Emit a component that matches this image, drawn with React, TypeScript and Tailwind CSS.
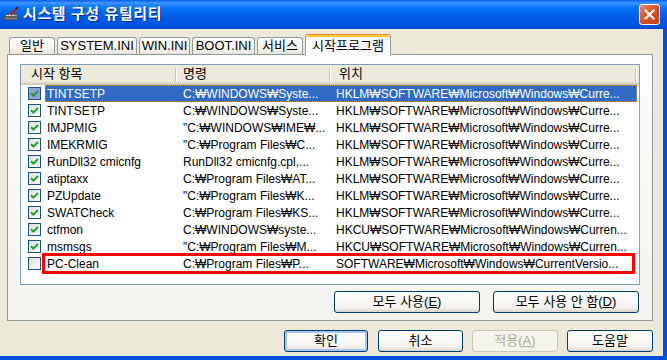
import React from "react";

type Row = { name: string; cmd: string; loc: string; checked: boolean };

const rows: Row[] = [
	{ name: "TINTSETP", cmd: "C:₩WINDOWS₩Syste...", loc: "HKLM₩SOFTWARE₩Microsoft₩Windows₩Curre...", checked: true },
	{ name: "TINTSETP", cmd: "C:₩WINDOWS₩Syste...", loc: "HKLM₩SOFTWARE₩Microsoft₩Windows₩Curre...", checked: true },
	{ name: "IMJPMIG", cmd: "\"C:₩WINDOWS₩IME₩...", loc: "HKLM₩SOFTWARE₩Microsoft₩Windows₩Curre...", checked: true },
	{ name: "IMEKRMIG", cmd: "\"C:₩Program Files₩C...", loc: "HKLM₩SOFTWARE₩Microsoft₩Windows₩Curre...", checked: true },
	{ name: "RunDll32 cmicnfg", cmd: "RunDll32 cmicnfg.cpl,...", loc: "HKLM₩SOFTWARE₩Microsoft₩Windows₩Curre...", checked: true },
	{ name: "atiptaxx", cmd: "C:₩Program Files₩AT...", loc: "HKLM₩SOFTWARE₩Microsoft₩Windows₩Curre...", checked: true },
	{ name: "PZUpdate", cmd: "\"C:₩Program Files₩K...", loc: "HKLM₩SOFTWARE₩Microsoft₩Windows₩Curre...", checked: true },
	{ name: "SWATCheck", cmd: "C:₩Program Files₩KS...", loc: "HKLM₩SOFTWARE₩Microsoft₩Windows₩Curre...", checked: true },
	{ name: "ctfmon", cmd: "C:₩WINDOWS₩syste...", loc: "HKCU₩SOFTWARE₩Microsoft₩Windows₩Curren...", checked: true },
	{ name: "msmsgs", cmd: "\"C:₩Program Files₩M...", loc: "HKCU₩SOFTWARE₩Microsoft₩Windows₩Curren...", checked: true },
	{ name: "PC-Clean", cmd: "C:₩Program Files₩P...", loc: "SOFTWARE₩Microsoft₩Windows₩CurrentVersio...", checked: false },
];

const tabs = [
	{ label: "일반", w: "w-[46px]" },
	{ label: "SYSTEM.INI", w: "w-[80px]" },
	{ label: "WIN.INI", w: "w-[51px]" },
	{ label: "BOOT.INI", w: "w-[63px]" },
	{ label: "서비스", w: "w-[46px]" },
];

function CheckBox({ checked, selected }: { checked: boolean; selected?: boolean }) {
	return (
		<span
			className={`flex h-[13px] w-[13px] items-center justify-center border border-[#1C5180] ${
				selected ? "bg-[#8FA6CC]" : "bg-[linear-gradient(135deg,#DCDCD7,#FFFFFF)]"
			}`}
		>
			{checked && (
				<svg width="9" height="9" viewBox="0 0 9 9">
					<path d="M1 4.2 L3.4 6.6 L8 2" stroke={selected ? "#2E8A3E" : "#21A121"} strokeWidth="2" fill="none" />
				</svg>
			)}
		</span>
	);
}

function XpButton({ children, w, isDefault, disabled }: { children: React.ReactNode; w: string; isDefault?: boolean; disabled?: boolean }) {
	return (
		<button
			className={`flex h-[22px] ${w} items-center justify-center rounded-[3px] border text-[13px] ${
				disabled
					? "border-[#C9C7BA] bg-[#F5F4EA] text-[#ACA899]"
					: "border-[#003C74] bg-[linear-gradient(to_bottom,#FFFFFF,#F3F2EC_80%,#D8D3C8)] text-black"
			} ${isDefault ? "shadow-[inset_0_0_0_2px_#A9C5F4]" : ""}`}
		>
			{children}
		</button>
	);
}

function TitleIcon() {
	return (
		<svg width="17" height="17" viewBox="0 0 17 17">
			<path d="M1 11 L4 8 L14 8 L15 11 Z" fill="#9C9C9C" stroke="#3C3C3C" strokeWidth="0.8" />
			<rect x="1" y="11" width="14" height="3" fill="#7A7A7A" stroke="#3C3C3C" strokeWidth="0.8" />
			<rect x="3" y="9" width="2" height="1" fill="#E8E8E8" />
			<rect x="6" y="9" width="2" height="1" fill="#E8E8E8" />
			<rect x="9" y="9" width="2" height="1" fill="#E8E8E8" />
			<path d="M8 9 L14 2" stroke="#C8201A" strokeWidth="2" />
			<path d="M13 3 L15 1" stroke="#2B2B2B" strokeWidth="2" />
		</svg>
	);
}

export default function App() {
	return (
		<div
			className="flex h-[360px] w-[667px] flex-col overflow-hidden bg-[#0050DE] text-[12px] text-black"
			style={{ fontFamily: '"Liberation Sans", "Noto Sans CJK KR", sans-serif' }}
		>
			{/* title bar */}
			<div className="flex h-[29px] shrink-0 items-center bg-[linear-gradient(to_bottom,#0A5DEA_0%,#3D95FF_10%,#1B80FF_20%,#0570F8_32%,#0262EE_48%,#0058E6_68%,#0055E3_88%,#0048CC_100%)] pl-[3px] pr-[7px]">
				<TitleIcon />
				<span className="ml-[3px] text-[15px] font-bold tracking-[0.6px] text-white [text-shadow:1px_1px_0_#0A2A8C]">시스템 구성 유틸리티</span>
				<div className="ml-auto flex h-[21px] w-[21px] items-center justify-center rounded-[3px] border border-white bg-[linear-gradient(135deg,#EB8B6E,#D8532E_45%,#C03A16)]">
					<svg width="11" height="11" viewBox="0 0 11 11">
						<path d="M1.5 1.5 L9.5 9.5 M9.5 1.5 L1.5 9.5" stroke="white" strokeWidth="2.2" strokeLinecap="square" />
					</svg>
				</div>
			</div>

			{/* body */}
			<div className="mb-[4px] mr-[4px] flex flex-1 flex-col bg-[#ECE9D8] pl-[7px] pr-[10px]">
				{/* tabs */}
				<div className="mt-[5px] flex h-[20px] items-end pl-[2px]">
					{tabs.map((t) => (
						<div
							key={t.label}
							className={`mr-[2px] flex h-[17px] ${t.w} items-center justify-center rounded-t-[3px] border border-b-0 border-[#919B9C] bg-[linear-gradient(to_bottom,#FFFFFF,#F3F2EC_70%,#E6E4DA)] text-[13px]`}
						>
							{t.label}
						</div>
					))}
					<div className="relative z-10 -mb-px flex h-[21px] w-[86px] items-center justify-center rounded-t-[3px] border border-b-0 border-[#919B9C] border-t-[#E68B2C] bg-[#FCFCFE] pt-[2px] text-[13px] shadow-[inset_0_2px_0_#FFC83C]">
						시작프로그램
					</div>
				</div>

				{/* panel */}
				<div className="flex h-[267px] flex-col border border-[#919B9C] bg-[linear-gradient(to_bottom,#FCFCFE,#F4F3EE)] px-[12px] pt-[9px]">
					<div className="flex h-[221px] flex-col border border-[#7F9DB9] bg-white">
						{/* header */}
						<div className="flex h-[20px] shrink-0 bg-[#EBEADB] text-[13px] shadow-[inset_0_-1px_0_#CBC7B8,inset_0_-2px_0_#D6D2C2,inset_0_-3px_0_#E2DECD]">
							<div className="flex w-[154px] items-center pl-[10px] pb-[2px]">시작 항목</div>
							<div className="my-[3px] w-px bg-[#C7C5B2]" />
							<div className="my-[3px] w-px bg-white" />
							<div className="flex w-[152px] items-center pl-[6px] pb-[2px]">명령</div>
							<div className="my-[3px] w-px bg-[#C7C5B2]" />
							<div className="my-[3px] w-px bg-white" />
							<div className="flex flex-1 items-center pl-[8px] pb-[2px]">위치</div>
							<div className="my-[3px] w-px bg-[#C7C5B2]" />
							<div className="my-[3px] mr-[2px] w-px bg-white" />
						</div>

						{/* rows */}
						{rows.map((r, i) => {
							const selected = i === 0;
							const flagged = i === rows.length - 1;
							return (
								<div key={i} className="relative flex h-[17px] shrink-0 items-center">
									<div className="flex w-[24px] items-center pl-[7px]">
										<CheckBox checked={r.checked} selected={selected} />
									</div>
									<div
										className={`mr-[2px] flex h-full flex-1 items-center whitespace-nowrap ${
											selected ? "bg-[#316AC5] text-white outline-1 outline-dotted outline-offset-[-1px] outline-[#C09A5A]" : ""
										}`}
									>
										<div className="w-[130px] overflow-hidden pl-[2px]">{r.name}</div>
										<div className="w-[154px] overflow-hidden pl-[8px]">{r.cmd}</div>
										<div className="flex-1 overflow-hidden pl-[7px]">{r.loc}</div>
									</div>
									{flagged && (
										<div className="pointer-events-none absolute left-[21px] top-[-2px] h-[21px] w-[593px] border-[3px] border-[#FF0000]" />
									)}
								</div>
							);
						})}
					</div>

					<div className="mt-[6px] flex justify-end gap-[13px] pr-[1px]">
						<XpButton w="w-[146px]">
							모두 사용(<span className="underline">E</span>)
						</XpButton>
						<XpButton w="w-[146px]">
							모두 사용 안 함(<span className="underline">D</span>)
						</XpButton>
					</div>
				</div>

				{/* dialog buttons */}
				<div className="mt-[9px] flex justify-end gap-[9px]">
					<div className="mr-px">
						<XpButton w="w-[84px]" isDefault>
							확인
						</XpButton>
					</div>
					<XpButton w="w-[85px]">취소</XpButton>
					<XpButton w="w-[86px]" disabled>
						적용(<span className="underline">A</span>)
					</XpButton>
					<XpButton w="w-[86px]">도움말</XpButton>
				</div>
			</div>
		</div>
	);
}
